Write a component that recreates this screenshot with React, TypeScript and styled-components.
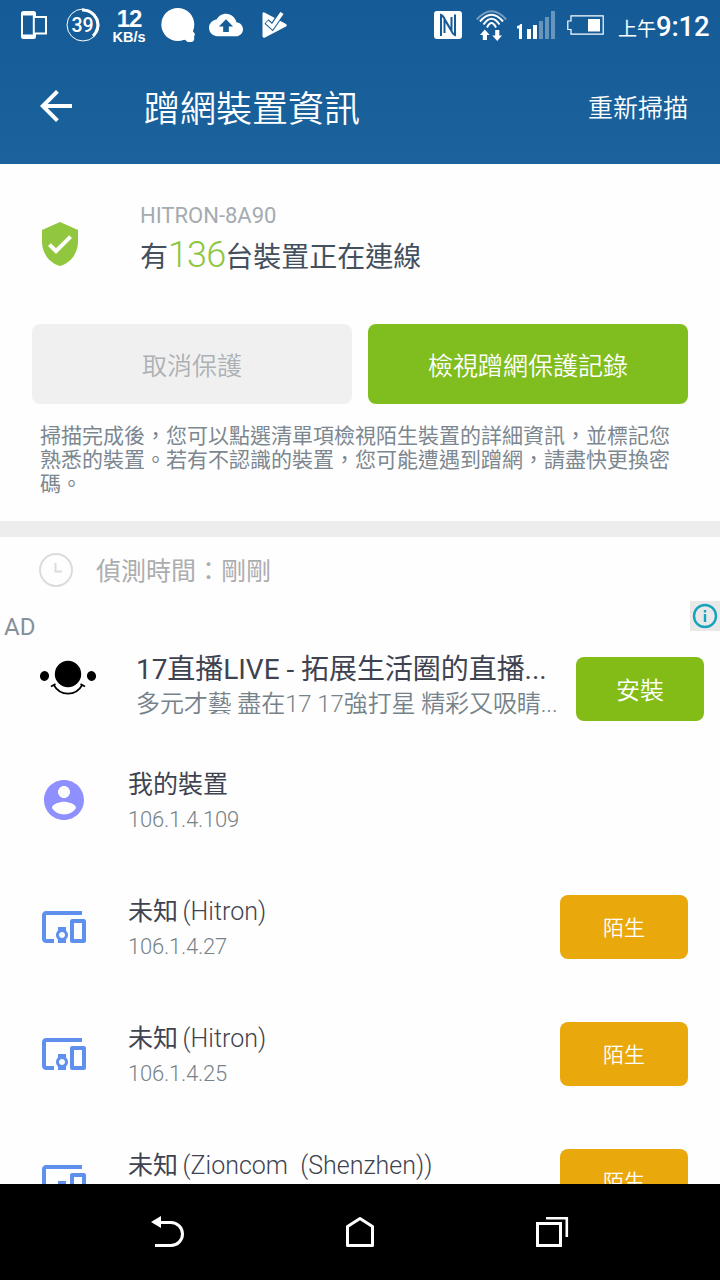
import React from "react";
import styled, { createGlobalStyle } from "styled-components";

const Global = createGlobalStyle`
  * { box-sizing: border-box; }
  body { margin: 0; background: #000; }
  button { border: 0; padding: 0; margin: 0; font-family: inherit; }
`;

const Screen = styled.div`
  width: 720px;
  height: 1280px;
  display: flex;
  flex-direction: column;
  overflow: hidden;
  background: #fefefe;
  font-family: Roboto, "Noto Sans CJK TC", sans-serif;
  white-space: nowrap;
`;

const Header = styled.header`
  flex: none;
  height: 164px;
  background: linear-gradient(#155b97, #1b639d);
  color: #fff;
`;

const StatusBar = styled.div`
  height: 50px;
  display: flex;
  align-items: center;
  justify-content: space-between;
  padding: 0 10px 0 21px;
`;

const StatusGroup = styled.div`
  display: flex;
  align-items: center;
  height: 50px;
`;

const Glyph = styled.svg<{ $w: number; $h: number; $gap?: number; $lift?: number }>`
  display: block;
  flex: none;
  width: ${(p) => p.$w}px;
  height: ${(p) => p.$h}px;
  margin-left: ${(p) => p.$gap ?? 0}px;
  margin-bottom: ${(p) => p.$lift ?? 0}px;
`;

const Speed = styled.div`
  width: 34px;
  margin: 2px 0 0 12px;
  text-align: center;
  font: 700 14.5px/16px "Liberation Sans", sans-serif;
  strong {
    display: block;
    font-size: 24px;
    line-height: 21px;
    letter-spacing: -1px;
  }
`;

const Clock = styled.div`
  width: 92px;
  margin-left: 14px;
  padding-top: 6px;
  display: flex;
  align-items: baseline;
  font-size: 19px;
  line-height: 50px;
  strong {
    font-size: 27.5px;
    font-weight: 500;
    letter-spacing: -0.2px;
  }
`;

const AppBar = styled.div`
  height: 112px;
  display: flex;
  align-items: center;
  padding: 0 32px;
`;

const Title = styled.h1`
  flex: 1;
  margin: 0 0 0 64px;
  padding-top: 7px;
  font-size: 36px;
  line-height: 50px;
  font-weight: 350;
`;

const Rescan = styled.button`
  background: none;
  color: #fff;
  padding-top: 5px;
  font-size: 25px;
  font-weight: 350;
  line-height: 50px;
`;

const Body = styled.main`
  flex: 1;
  min-height: 0;
  overflow: hidden;
`;

const Summary = styled.section`
  height: 160px;
  display: flex;
  align-items: center;
  padding-left: 36px;
`;

const SummaryText = styled.div`
  margin: -4px 0 0 56px;
`;

const Ssid = styled.div`
  font-size: 22px;
  line-height: 31px;
  color: #a4abb1;
`;

const Count = styled.div`
  font-size: 28px;
  line-height: 53px;
  color: #44505d;
  em {
    font-style: normal;
    font-weight: 300;
    font-size: 36px;
    line-height: 40px;
    color: #8cc63f;
    letter-spacing: -0.9px;
  }
`;

const Actions = styled.div`
  display: flex;
  gap: 16px;
  padding: 0 32px;
`;

const ActionButton = styled.button<{ $primary?: boolean }>`
  flex: 1;
  height: 80px;
  border-radius: 8px;
  background: ${(p) => (p.$primary ? "#80be1f" : "#f0f0f0")};
  color: ${(p) => (p.$primary ? "#fff" : "#adb0b4")};
  font-size: 25px;
  font-weight: 350;
`;

const Hint = styled.p`
  height: 117px;
  margin: 0;
  padding: 20px 40px 0;
  font-size: 21px;
  line-height: 24px;
  color: #7c8790;
`;

const Divider = styled.div`
  height: 16px;
  background: #ededed;
`;

const ScanTime = styled.div`
  height: 64px;
  display: flex;
  align-items: center;
  padding: 2px 0 0 38px;
  gap: 22px;
  font-size: 25px;
  line-height: 36px;
  color: #acadae;
  span { padding-top: 3px; }
`;

const Ad = styled.section`
  height: 135px;
`;

const AdTop = styled.div`
  height: 40px;
  display: flex;
  justify-content: space-between;
  padding-left: 4px;
  font-size: 24px;
  line-height: 52px;
  color: #85909a;
`;

const AdInfo = styled.div`
  width: 30px;
  height: 30px;
  background: #e9e9e9;
`;

const AdRow = styled.div`
  display: flex;
  align-items: center;
  height: 95px;
  padding: 1px 16px 0 40px;
`;

const AdText = styled.div`
  flex: 1;
  margin: 0 0 5px 40px;
`;

const AdTitle = styled.div`
  font-size: 28px;
  line-height: 35px;
  letter-spacing: -0.05px;
  color: #3f4350;
`;

const AdSub = styled.div`
  font-size: 24px;
  line-height: 34px;
  letter-spacing: -0.1px;
  font-weight: 350;
  color: #75828a;
`;

const Tag = styled.button<{ $kind: "install" | "stranger" }>`
  width: 128px;
  height: 64px;
  border-radius: 8px;
  color: #fff;
  background: ${(p) => (p.$kind === "install" ? "#83bc16" : "#e9a90c")};
  font-size: ${(p) => (p.$kind === "install" ? 24 : 21)}px;
  font-weight: 350;
  padding-bottom: 2px;
`;

const DeviceRow = styled.div`
  height: 127px;
  display: flex;
  align-items: center;
  padding: 0 32px 0 40px;
`;

const DeviceText = styled.div`
  flex: 1;
  margin: 5px 0 0 40px;
`;

const DeviceName = styled.div`
  font-size: 25px;
  line-height: 36px;
  font-weight: 400;
  color: #3f4350;
  span {
    margin-left: -1.5px;
    font-weight: 300;
    white-space: pre;
  }
`;

const DeviceIp = styled.div`
  font-size: 22px;
  line-height: 34px;
  font-weight: 300;
  letter-spacing: -0.22px;
  color: #77838a;
`;

const NavBar = styled.nav`
  flex: none;
  height: 96px;
  background: #000;
  display: flex;
  justify-content: center;
  align-items: center;
  gap: 152px;
`;

const devices = [
  { name: "我的裝置", vendor: "", ip: "106.1.4.109", mine: true },
  { name: "未知", vendor: "(Hitron)", ip: "106.1.4.27" },
  { name: "未知", vendor: "(Hitron)", ip: "106.1.4.25" },
  { name: "未知", vendor: "(Zioncom  (Shenzhen))", ip: "" },
];

const ACCOUNT =
  "M12 2C6.48 2 2 6.48 2 12s4.48 10 10 10 10-4.48 10-10S17.52 2 12 2zm0 3c1.66 0 3 1.34 3 3s-1.34 3-3 3-3-1.34-3-3 1.34-3 3-3zm0 14.2c-2.5 0-4.71-1.28-6-3.22.03-1.99 4-3.08 6-3.08 1.99 0 5.97 1.09 6 3.08-1.29 1.94-3.5 3.22-6 3.22z";
const DEVICES =
  "M3 6h18V4H3c-1.1 0-2 .9-2 2v12c0 1.1.9 2 2 2h4v-2H3V6zm10 6H9v1.78c-.61.55-1 1.33-1 2.22s.39 1.67 1 2.22V20h4v-1.78c.61-.55 1-1.34 1-2.22s-.39-1.67-1-2.22V12zm-2 5.5c-.83 0-1.5-.67-1.5-1.5s.67-1.5 1.5-1.5 1.5.67 1.5 1.5-.67 1.5-1.5 1.5zM22 8h-6c-.5 0-1 .5-1 1v10c0 .5.5 1 1 1h6c.5 0 1-.5 1-1V9c0-.5-.5-1-1-1zm-1 10h-4v-8h4v8z";
const SHIELD =
  "M12 1L3 5v6c0 5.55 3.84 10.74 9 12 5.16-1.26 9-6.45 9-12V5l-9-4zm-2 16l-4-4 1.41-1.41L10 14.17l6.59-6.59L18 9l-8 8z";
const BACK = "M20 11H7.83l5.59-5.59L12 4l-8 8 8 8 1.41-1.41L7.83 13H20v-2z";
const CLOUD =
  "M19.35 10.04C18.67 6.59 15.64 4 12 4 9.11 4 6.6 5.64 5.35 8.04 2.34 8.36 0 10.91 0 14c0 3.31 2.69 6 6 6h13c2.76 0 5-2.24 5-5 0-2.64-2.05-4.78-4.65-4.96zM14 13v4h-4v-4H7l5-5 5 5h-3z";

const StatusIcons = () => (
  <StatusBar>
    <StatusGroup>
      <Glyph $w={26} $h={28} viewBox="0 0 26 28" fill="none" stroke="#fff">
        <path d="M15 6V2.500Q15 0 12.500 0H2.500Q0 0 0 2.500V25.500Q0 28 2.500 28H12.500Q15 28 15 25.500V23H12V23.500H2V4.500H12V6Z" fill="#fff" stroke="none" />
        <path d="M12.800 6H25V22.500H12.800Z" strokeWidth="2" />
      </Glyph>
      <Glyph $w={34} $h={34} $gap={19} viewBox="0 0 34 34" fill="none" stroke="#fff">
        <circle cx="17" cy="17" r="16" strokeWidth="1" />
        <path d="M16 2A15 15 0 0 1 27 28" strokeWidth="3" />
        <text x="16.500" y="24" textAnchor="middle" fontFamily="Roboto" fontWeight="500" fontSize="19.500" fill="#fff" stroke="none">39</text>
      </Glyph>
      <Speed><strong>12</strong>KB/s</Speed>
      <Glyph $w={34} $h={34} $gap={15} viewBox="0 0 34 34" fill="#fff">
        <circle cx="16.800" cy="16.500" r="16.500" />
        <path d="M22 31Q25 32 26.500 34H31Q34 33 33 29L34 26L31 22Z" />
      </Glyph>
      <Glyph $w={34} $h={34} $gap={14} viewBox="0 0 24 24" fill="#fff"><path d={CLOUD} /></Glyph>
      <Glyph $w={25} $h={26} $gap={19} viewBox="0 0 25 26" fill="#fff">
        <path d="M2.500 .5Q.5 -.5 .5 2V24Q.5 26.500 3 25.500L24 14.500Q25.500 13.500 24 12Z" />
        <path d="M4.500 9.500L10.300 14.800L20.500 0" fill="none" stroke="#155b97" strokeWidth="6" />
        <path d="M5 10L10.300 14.800L20 1" fill="none" stroke="#fff" strokeWidth="3.800" />
      </Glyph>
    </StatusGroup>
    <StatusGroup>
      <Glyph $w={28} $h={28} viewBox="0 0 28 28">
        <rect width="28" height="28" rx="3" fill="#fff" />
        <path d="M7 25V4Q9.500 5 11 9L17.500 20V6M21 3.500V24Q18.500 23 17 19L10.500 8V22" fill="none" stroke="#155b97" strokeWidth="2" />
      </Glyph>
      <Glyph $w={32} $h={32} $gap={14} viewBox="0 0 32 32" fill="none" stroke="#fff" strokeWidth="2">
        <path d="M.8 10.500Q15.500 -6 30.200 10.500" opacity=".4" />
        <path d="M4 12.500Q15.500 -1 27 12.500M7.500 15.500Q15.500 4 23.500 15.500M11 18.500Q15.500 9.500 20 18.500" />
        <path d="M8.800 20.500L4 26H6.800V31H11V26H13.700ZM21.200 32L26 26.500H23.300V21H19.200V26.500H16.300Z" fill="#fff" stroke="none" />
      </Glyph>
      <Glyph $w={38} $h={28} $gap={9} viewBox="0 0 38 28" fill="#fff">
        <path d="M0 15V17.500H2V28H5V13H3.500Q2.500 15 0 15ZM10 18H14V28H10ZM16 14H20V28H16Z" />
        <path d="M22 10H26V28H22ZM28 6H32V28H28ZM34 0H38V28H34Z" opacity=".35" />
      </Glyph>
      <Glyph $w={37} $h={20} $gap={12} viewBox="0 0 37 20" fill="none" stroke="#fff" strokeWidth="1.200">
        <path d="M4 .8H36.200V19.200H4V14.500H.8V6H4Z" />
        <path d="M21 4H33V16.500H21Z" fill="#fff" stroke="none" />
      </Glyph>
      <Clock>上午<strong>9:12</strong></Clock>
    </StatusGroup>
  </StatusBar>
);

export default function App() {
  return (
    <Screen>
      <Global />
      <Header>
        <StatusIcons />
        <AppBar>
          <Glyph $w={48} $h={48} viewBox="0 0 24 24" fill="#fff"><path d={BACK} /></Glyph>
          <Title>蹭網裝置資訊</Title>
          <Rescan>重新掃描</Rescan>
        </AppBar>
      </Header>
      <Body>
        <Summary>
          <Glyph $w={48} $h={48} viewBox="0 0 24 24" fill="#91c63f"><path d={SHIELD} /></Glyph>
          <SummaryText>
            <Ssid>HITRON-8A90</Ssid>
            <Count>有<em>136</em>台裝置正在連線</Count>
          </SummaryText>
        </Summary>
        <Actions>
          <ActionButton>取消保護</ActionButton>
          <ActionButton $primary>檢視蹭網保護記錄</ActionButton>
        </Actions>
        <Hint>
          掃描完成後，您可以點選清單項檢視陌生裝置的詳細資訊，並標記您<br />
          熟悉的裝置。若有不認識的裝置，您可能遭遇到蹭網，請盡快更換密<br />
          碼。
        </Hint>
        <Divider />
        <ScanTime>
          <Glyph $w={36} $h={36} viewBox="0 0 36 36" fill="none" stroke="#dcdcdc" strokeWidth="2">
            <circle cx="18" cy="18" r="16" />
            <path d="M17.500 11V19.500H24" />
          </Glyph>
          <span>偵測時間：剛剛</span>
        </ScanTime>
        <Ad>
          <AdTop>
            <span>AD</span>
            <AdInfo>
              <Glyph $w={30} $h={30} viewBox="0 0 30 30" fill="none" stroke="#18a3bd" strokeWidth="2.400">
                <circle cx="15" cy="15" r="11" />
                <path d="M15 13V21M15 9V11.500" />
              </Glyph>
            </AdInfo>
          </AdTop>
          <AdRow>
            <Glyph $w={56} $h={56} $lift={24} viewBox="0 0 56 56">
              <circle cx="28" cy="25" r="13.200" />
              <ellipse cx="4.500" cy="27" rx="4.500" ry="5" transform="rotate(15 4.500 27)" />
              <ellipse cx="51.500" cy="27" rx="4.500" ry="5" transform="rotate(-15 51.500 27)" />
              <path d="M13.500 35.500Q18.500 44.700 28 44.700Q37.500 44.700 42.500 35.500M11 37.500L15.500 35M40.500 35L45 37.500" fill="none" stroke="#000" strokeWidth="1.700" />
            </Glyph>
            <AdText>
              <AdTitle>17直播LIVE - 拓展生活圈的直播...</AdTitle>
              <AdSub>多元才藝 盡在17 17強打星 精彩又吸睛...</AdSub>
            </AdText>
            <Tag $kind="install">安裝</Tag>
          </AdRow>
        </Ad>
        {devices.map((d, i) => (
          <DeviceRow key={i}>
            <Glyph $w={48} $h={48} viewBox="0 0 24 24" fill={d.mine ? "#8f90ff" : "#5f90ee"}>
              <path d={d.mine ? ACCOUNT : DEVICES} />
            </Glyph>
            <DeviceText>
              <DeviceName>{d.name}{d.vendor && <span> {d.vendor}</span>}</DeviceName>
              <DeviceIp>{d.ip || "\u00a0"}</DeviceIp>
            </DeviceText>
            {!d.mine && <Tag $kind="stranger">陌生</Tag>}
          </DeviceRow>
        ))}
      </Body>
      <NavBar>
        <Glyph $w={40} $h={40} viewBox="0 0 40 40" fill="none" stroke="#fff" strokeWidth="3">
          <path d="M11 10.500H23A11.500 11.500 0 0 1 23 33.500H7" />
          <path d="M3 10L13 4V16Z" fill="#fff" stroke="none" />
        </Glyph>
        <Glyph $w={40} $h={40} viewBox="0 0 40 40" fill="none" stroke="#fff" strokeWidth="3" strokeLinejoin="round">
          <path d="M7.500 33.500V14.500L20 6.500L32.500 14.500V33.500Z" />
        </Glyph>
        <Glyph $w={40} $h={40} viewBox="0 0 40 40" fill="none" stroke="#fff" strokeWidth="3">
          <path d="M5.500 11.500H28.500V33.500H5.500Z" />
          <path d="M14 6.300H34.800V25" strokeWidth="2.600" />
        </Glyph>
      </NavBar>
    </Screen>
  );
}
